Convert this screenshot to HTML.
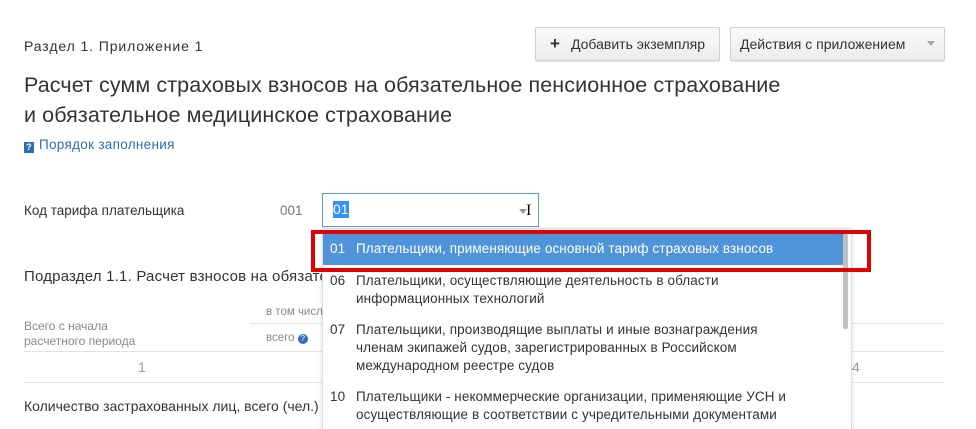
<!DOCTYPE html>
<html><head><meta charset="utf-8"><style>
body{margin:0;width:976px;height:417px;overflow:hidden;background:#fff;font-family:"Liberation Sans","Noto Sans CJK SC",sans-serif;color:#333;position:relative}
.a{position:absolute;white-space:nowrap}
.btn{position:absolute;top:27px;height:32px;border:1px solid #d0d0d0;border-radius:2px;background:linear-gradient(#fafafa,#ececec);box-shadow:0 1px 1px rgba(0,0,0,.1);font-size:14px;line-height:32px;color:#333}
.hl{position:absolute;height:1px;background:#e3e3e3}
.opt{position:absolute;left:330px;font-size:13.5px;line-height:18px;color:#333;letter-spacing:.1px}
.opt span{display:inline-block;width:26px;vertical-align:top}
.opt div{display:inline-block;vertical-align:top}
</style></head><body>
<div class="a" style="left:24px;top:38px;font-size:14px;letter-spacing:.9px">Раздел 1. Приложение 1</div>
<div class="btn" style="left:535px;width:183px"><span style="position:absolute;left:14px;font-weight:bold;font-size:17px">+</span><span style="position:absolute;left:35px">Добавить экземпляр</span></div>
<div class="btn" style="left:730px;width:213px"><span style="position:absolute;left:9px">Действия с приложением</span><span style="position:absolute;right:9px;top:13px;width:0;height:0;border-left:4px solid transparent;border-right:4px solid transparent;border-top:5px solid #aaa"></span></div>
<div class="a" style="left:24px;top:70px;font-size:21.5px;line-height:30px;color:#333;letter-spacing:.1px">Расчет сумм страховых взносов на обязательное пенсионное страхование<br>и обязательное медицинское страхование</div>
<div class="a" style="left:24px;top:137px;font-size:13.5px;color:#2f6eb5;letter-spacing:.3px"><span style="display:inline-block;width:10px;height:11px;background:#2f6eb5;color:#fff;font-size:9px;line-height:11px;text-align:center;font-weight:bold;vertical-align:-1px;margin-right:5px">?</span>Порядок заполнения</div>
<div class="a" style="left:24px;top:203px;font-size:13.5px">Код тарифа плательщика</div>
<div class="a" style="left:280px;top:203px;font-size:13.5px;color:#777">001</div>
<div class="a" style="left:322px;top:193px;width:215px;height:32px;border:1px solid #5b9bd5"></div>
<div class="a" style="left:333px;top:201px;font-size:14px;background:#3391ff;color:#fff;line-height:17px">01</div>
<div class="a" style="left:519px;top:209px;border-left:4px solid transparent;border-right:4px solid transparent;border-top:5px solid #999"></div>
<div class="a" style="left:526px;top:202px;font-size:16px;color:#000;font-family:'Liberation Serif',serif">I</div>
<div class="a" style="left:24px;top:268px;font-size:15px;color:#333;letter-spacing:.2px">Подраздел 1.1. Расчет взносов на обязательное</div>
<div class="a" style="left:266px;top:306px;font-size:11.5px;color:#888">в том числе</div>
<div class="a" style="left:24px;top:319px;font-size:12px;line-height:15px;color:#888">Всего с начала<br>расчетного периода</div>
<div class="a" style="left:266px;top:332px;font-size:11.5px;color:#888">всего <span style="display:inline-block;width:10px;height:10px;border-radius:50%;background:#2f6eb5;color:#fff;font-size:8px;line-height:10px;text-align:center">?</span></div>
<div class="hl" style="left:250px;top:323px;width:80px"></div>
<div class="hl" style="left:845px;top:323px;width:99px"></div>
<div class="hl" style="left:24px;top:351px;width:920px"></div>
<div class="hl" style="left:24px;top:382px;width:920px"></div>
<div class="a" style="left:138px;top:359px;font-size:14px;color:#999">1</div>
<div class="a" style="left:852px;top:359px;font-size:14px;color:#999">4</div>
<div class="a" style="left:24px;top:398px;font-size:14px;color:#333">Количество застрахованных лиц, всего (чел.)</div>
<div class="a" style="left:322px;top:228px;width:528px;height:200px;background:#fff;border-left:1px solid #ddd;border-right:1px solid #ddd;border-top:1px solid #ddd;box-shadow:0 2px 4px rgba(0,0,0,.15)"></div>
<div class="a" style="left:323px;top:234px;width:521px;height:31px;background:#4f94d8"></div>
<div class="a" style="left:843px;top:234px;width:5px;height:95px;background:#c1c1c1;border-radius:2px"></div>
<div class="opt" style="top:240px;color:#fff"><span>01</span><div>Плательщики, применяющие основной тариф страховых взносов</div></div>
<div class="opt" style="top:272px"><span>06</span><div>Плательщики, осуществляющие деятельность в области<br>информационных технологий</div></div>
<div class="opt" style="top:321px"><span>07</span><div>Плательщики, производящие выплаты и иные вознаграждения<br>членам экипажей судов, зарегистрированных в Российском<br>международном реестре судов</div></div>
<div class="opt" style="top:388px"><span>10</span><div>Плательщики - некоммерческие организации, применяющие УСН и<br>осуществляющие в соответствии с учредительными документами</div></div>
<div class="a" style="left:311px;top:230px;width:552px;height:34px;border:4px solid #e00000"></div>
</body></html>
